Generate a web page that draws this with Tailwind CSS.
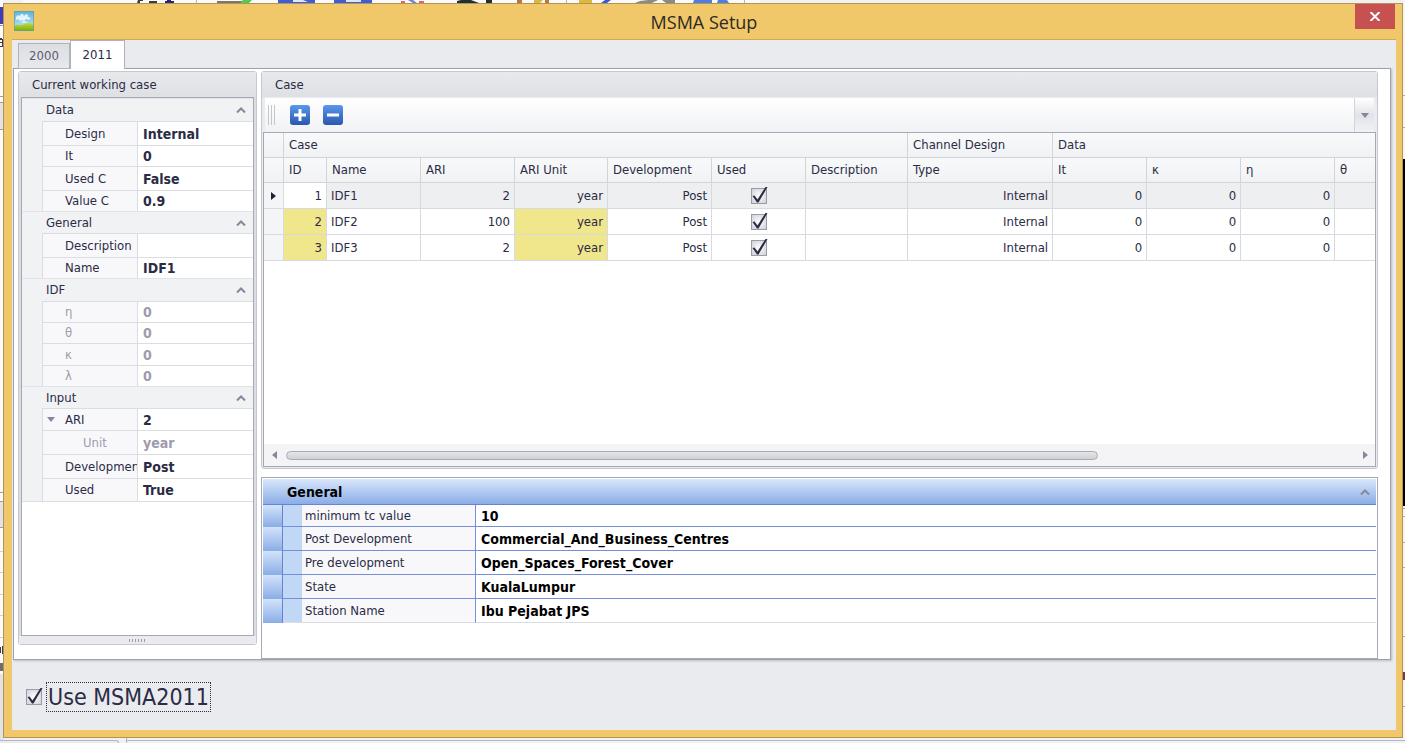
<!DOCTYPE html>
<html lang="en">
  <head>
    <meta charset="UTF-8" />
    <meta name="viewport" content="width=device-width,initial-scale=1" />
    <title>MSMA Setup</title>
    <script src="https://cdn.jsdelivr.net/npm/@tailwindcss/browser@4"></script>
  </head>
  <body class="relative flex min-h-screen flex-col bg-[#f1f1f4] pt-[3px] pr-[2px] pb-[5px] pl-[3px] font-['DejaVu_Sans_Condensed','Noto_Sans',sans-serif] text-[13px] leading-5 text-[#2b2b45]">

    <!-- main application, peeking out behind the dialog -->
    <div class="absolute inset-0 overflow-hidden" aria-hidden="true">
      <svg class="absolute top-0 left-0" width="760" height="3" viewBox="0 0 760 3">
        <path fill="#fafafc" d="M23 0h737v3H23z" />
        <path fill="#3c3c3c" d="M138 0h5v1h-3v2h-3zM149 1h8v2h-8z" />
        <path fill="#26267c" d="M167 0h4v1h3v2h-9V1h2z" />
        <path fill="#77776c" d="M217 1h26v2h-26z" />
        <path fill="#52c952" d="M243 0h9l-3 3h-9z" />
        <path fill="#3c5fd8" d="M278 0h37v3h-37zM334 0h38v3h-38z" />
        <path fill="#dfe6fb" d="M293 0h10l5 2h-15zM346 0h15v2h-15z" />
        <path fill="#e06a6a" d="M401 1h4v2h-4zM419 1h5v2h-5z" />
        <path fill="#6a86e0" d="M408 0h5l4 3h-4z" />
        <path fill="#1f3038" d="M457 1l4-1h10l8 3h-22zM486 0h6v3h-6z" />
        <path fill="#b97838" d="M517 0h5v3h-5zM545 0h4v3h-4z" />
        <path fill="#dcb93c" d="M534 0h9l-3 3h-6zM579 0h13v3h-13z" />
        <path fill="#3558dc" d="M605 0h6l-4 3h-6z" />
        <path fill="#8a8a8a" d="M640 1l8-1h10l-6 3h-17zM662 0h13v3h-9z" />
        <path fill="#4c7ee6" d="M694 0h18v3h-19zM718 0h9l2 3h-12z" />
        <path fill="#b5b7c0" d="M196 0h1v3h-1zM566 0h1v3h-1zM744 0h1v3h-1z" />
      </svg>
      <svg class="absolute top-0 left-0" width="3" height="743" viewBox="0 0 3 743">
        <path fill="#fbfbfd" d="M0 0h3v743H0z" />
        <path fill="#4338c0" d="M0 7h3v17H0z" />
        <path fill="#9a9ca6" d="M0 25h3v1H0zM0 96h3v1H0zM0 102h3v1H0zM0 129h3v1H0zM0 492h3v1H0zM0 501h3v1H0zM0 527h3v1H0z" />
        <path fill="#3a3a58" d="M0 38h2v2H0zM0 42h2v1H0zM0 46h3v1H0z M2 39h1v8H2zM2 646h1v8H2zM0 647h1v6H0z" />
        <path fill="#e2e3e8" d="M0 103h3v26H0zM0 502h3v25H0zM0 674h3v69H0z" />
        <path fill="#cfd0d6" d="M0 551h3v1H0zM0 572h3v1H0zM0 594h3v1H0zM0 615h3v1H0zM0 637h3v1H0z" />
        <path fill="#6c6c74" d="M0 663h3v8H0z" />
      </svg>
      <svg class="absolute top-0 right-0" width="2" height="743" viewBox="0 0 2 743">
        <path fill="#f6f6f9" d="M0 0h2v743H0z" />
        <path fill="#a9abb5" d="M0 95h2v1H0zM0 127h2v1H0zM0 508h2v1H0zM0 516h2v1H0zM0 542h2v1H0zM0 567h2v1H0zM0 636h2v1H0zM0 706h2v1H0z" />
        <path d="M0 159h2v347H0z" />
        <path fill="#7a3c3c" d="M0 672h2v8H0z" />
      </svg>
      <div class="absolute bottom-0 left-0 h-[3px] w-[119px] rounded-tr-sm border-t border-r border-[#b5b7c0] bg-[#eaebef]"></div>
      <div class="absolute right-0 bottom-0 left-[126px] h-[5px] border-l border-[#b5b7c0] bg-[#f1f2f5] pt-[2px]">
        <div class="border-t border-[#b5b7c0]"></div>
      </div>
    </div>

    <!-- dialog -->
    <div class="relative flex flex-1 flex-col border border-[#b3934d] bg-[#f0c869] pr-[6px] pb-[7px] pl-2">

      <!-- title bar -->
      <header class="relative flex h-[35px] items-center justify-center">
        <svg class="absolute top-[7px] left-[2px]" width="20" height="20" viewBox="0 0 20 20">
          <defs>
            <linearGradient id="sky" x1="0" y1="0" x2="0" y2="1">
              <stop offset="0" stop-color="#5fb4de" />
              <stop offset="1" stop-color="#c4ecf6" />
            </linearGradient>
            <linearGradient id="hill" x1="0" y1="0" x2="0" y2="1">
              <stop offset="0" stop-color="#c8dc3c" />
              <stop offset="1" stop-color="#6fae14" />
            </linearGradient>
          </defs>
          <rect width="20" height="20" fill="url(#sky)" />
          <path d="M2 6l2-2 2 1 1-2h2l1 2 2-2 2 1v2l3 1-2 2-3-1-2 2-2-1-2 1-2-2-2 1z" fill="#fff" opacity=".8" />
          <path d="M7 11l3-1 4 1-2 1H8z" fill="#fff" opacity=".7" />
          <path d="M0 15c3-2 6-1 8-1 3-2 7-3 12-1v7H0z" fill="url(#hill)" />
          <rect x=".5" y=".5" width="19" height="19" fill="none" stroke="#6a9d92" stroke-opacity=".7" />
        </svg>
        <h1 class="font-['Open_Sans','Noto_Sans',sans-serif] text-lg text-[#2c2a26]">MSMA Setup</h1>
        <button type="button" aria-label="Close" class="absolute top-0 right-[1px] flex h-[25px] w-10 items-center justify-center bg-[#c75050]">
          <svg width="12" height="9" viewBox="0 0 12 9" stroke="#fff" stroke-width="2"><path d="M1.500 0l9 9M10.500 0l-9 9" /></svg>
        </button>
      </header>

      <main class="flex flex-1 flex-col border-t border-[#cfaa5a] bg-[#eaebef] pr-[5px] pl-[1px]">

        <!-- tabs -->
        <div class="relative z-10 -mb-px flex items-end pl-[5px]" role="tablist">
          <button type="button" role="tab" aria-selected="false" class="h-[26px] w-[52px] border border-[#b0b2bc] bg-linear-to-b from-[#dddee2] to-[#e8e9ed] text-[#5c5c70]">2000</button>
          <button type="button" role="tab" aria-selected="true" class="h-[29px] w-[55px] border border-b-0 border-[#b0b2bc] bg-white">2011</button>
        </div>

        <!-- tab page -->
        <div class="flex flex-1 gap-1 border border-[#9fa1ab] bg-white pt-[2px] pr-3 pl-1 shadow-[1px_1px_2px_#b9bac2]">

          <!-- current working case -->
          <section class="mb-[14px] flex w-[239px] shrink-0 flex-col rounded-[3px] border border-[#c6c8d0] bg-[#dcdde2] px-[2px]">
            <h2 class="-mx-[2px] h-[25px] bg-linear-to-b from-[#e8e9ed] to-[#dfe0e4] pt-[3px] pl-[13px]">Current working case</h2>
            <div class="flex-1 border border-[#a6a8b4] bg-white">
              <table class="w-full table-fixed border-separate border-spacing-0 text-left">
                <colgroup>
                  <col class="w-[21px]" />
                  <col class="w-[95px]" />
                  <col />
                </colgroup>
                <tbody id="case-props"></tbody>
              </table>
            </div>
            <div class="-mx-[2px] flex h-2 items-center justify-center bg-[#eaebef]">
              <div class="h-[3px] w-[17px] bg-[repeating-linear-gradient(90deg,#9a9ca8_0_1px,transparent_1px_3px)]"></div>
            </div>
          </section>

          <div class="flex min-w-0 flex-1 flex-col gap-2">

            <!-- case list -->
            <section class="flex flex-1 flex-col rounded-[3px] border border-[#c6c8d0] bg-[#eaebef] px-px pb-px">
              <h2 class="-mx-px h-[25px] bg-linear-to-b from-[#e8e9ed] to-[#dfe0e4] pt-[3px] pl-[13px]">Case</h2>
              <div class="mt-px mr-[2px] ml-[2px] flex h-[34px] items-center bg-linear-to-b from-white to-[#f1f2f5]">
                <div class="ml-[3px] h-5 w-[7px] bg-[repeating-linear-gradient(90deg,#c4c5cd_0_1px,transparent_1px_3px)]"></div>
                <button type="button" aria-label="Add case" class="ml-[15px] flex size-5 items-center justify-center rounded-[3px] bg-linear-to-b from-[#5b97ee] to-[#2958ae]">
                  <svg width="14" height="14" viewBox="0 0 14 14" fill="#fff"><path d="M5.500 1h3v4.500h4.500v3H8.500V13h-3V8.500H1v-3h4.500z" /></svg>
                </button>
                <button type="button" aria-label="Remove case" class="ml-[13px] flex size-5 items-center justify-center rounded-[3px] bg-linear-to-b from-[#5b97ee] to-[#2958ae]">
                  <svg width="14" height="14" viewBox="0 0 14 14" fill="#fff"><path d="M1 5.500h12v3H1z" /></svg>
                </button>
                <button type="button" aria-label="Toolbar options" class="ml-auto flex h-full w-5 items-center justify-center border-l border-[#d3d4da] bg-linear-to-b from-white via-[#e2e3e9] to-[#f1f2f5]">
                  <svg width="8" height="5" viewBox="0 0 8 5" fill="#85879a"><path d="M0 0h8L4 5z" /></svg>
                </button>
              </div>

              <div class="flex flex-1 flex-col border border-[#a6a8b4] bg-white">
                <table class="w-full table-fixed border-separate border-spacing-0">
                  <colgroup>
                    <col class="w-5" />
                    <col class="w-[43px]" />
                    <col class="w-[94px]" />
                    <col class="w-[94px]" />
                    <col class="w-[93px]" />
                    <col class="w-[104px]" />
                    <col class="w-[94px]" />
                    <col class="w-[102px]" />
                    <col class="w-[145px]" />
                    <col class="w-[94px]" />
                    <col class="w-[94px]" />
                    <col class="w-[94px]" />
                    <col />
                  </colgroup>
                  <thead id="case-head"></thead>
                  <tbody id="case-rows"></tbody>
                </table>

                <!-- horizontal scroll bar -->
                <div class="mt-auto flex h-[22px] items-center bg-[#f4f4f6] pr-[7px] pl-2">
                  <svg width="5" height="8" viewBox="0 0 5 8" fill="#85879a"><path d="M5 0v8L0 4z" /></svg>
                  <div class="mx-[9px] flex-1">
                    <div class="h-[9px] w-[76%] rounded-full border border-[#a9abb4] bg-linear-to-b from-[#e4e5e8] to-[#d0d1d5]"></div>
                  </div>
                  <svg width="5" height="8" viewBox="0 0 5 8" fill="#85879a"><path d="M0 0v8l5-4z" /></svg>
                </div>
              </div>
            </section>

            <!-- general settings -->
            <section class="h-[182px] border border-[#a6a8b4] bg-white p-px">
              <table class="w-full table-fixed border-separate border-spacing-0 text-left">
                <colgroup>
                  <col class="w-5" />
                  <col class="w-[193px]" />
                  <col />
                </colgroup>
                <tbody id="general-props"></tbody>
              </table>
            </section>
          </div>
        </div>

        <!-- footer -->
        <footer class="flex h-[70px] items-center pt-[3px] pl-[13px]">
          <span class="grid size-4">
            <input id="use-2011" type="checkbox" checked class="col-start-1 row-start-1 size-4 appearance-none border border-[#9a9ca8] bg-radial from-white to-[#cfd0d7]" />
            <svg class="pointer-events-none col-start-1 row-start-1 overflow-visible" width="16" height="16" viewBox="0 0 16 16" fill="#2b2b45"><path d="M1.500 8L3.500 7.500l3 4L14.500-1H16.500L7.500 14.500H6z" /></svg>
          </span>
          <label for="use-2011" class="ml-1 border border-dotted border-[#2b2b45] px-px text-[23px] leading-7">Use MSMA2011</label>
        </footer>
      </main>
    </div>

    <script>
      const caseProps = [
        { group: "Data", h: "h-[23px]" },
        { name: "Design", value: "Internal", h: "h-6" },
        { name: "It", value: "0", h: "h-[21px]" },
        { name: "Used C", value: "False", h: "h-6" },
        { name: "Value C", value: "0.9", h: "h-[21px]" },
        { group: "General", h: "h-[22px]" },
        { name: "Description", value: "", h: "h-6" },
        { name: "Name", value: "IDF1", h: "h-[21px]" },
        { group: "IDF", h: "h-[23px]" },
        { name: "η", value: "0", h: "h-[21px]", off: true },
        { name: "θ", value: "0", h: "h-[21px]", off: true },
        { name: "κ", value: "0", h: "h-[22px]", off: true },
        { name: "λ", value: "0", h: "h-[21px]", off: true },
        { group: "Input", h: "h-[22px]" },
        { name: "ARI", value: "2", h: "h-[22px]", open: true },
        { name: "Unit", value: "year", h: "h-6", off: true, child: true },
        { name: "Development", value: "Post", h: "h-6" },
        { name: "Used", value: "True", h: "h-[23px]" },
      ];

      const cases = [
        { id: 1, name: "IDF1", ari: 2 },
        { id: 2, name: "IDF2", ari: 100 },
        { id: 3, name: "IDF3", ari: 2 },
      ];

      const general = [
        ["minimum tc value", "10"],
        ["Post Development", "Commercial_And_Business_Centres"],
        ["Pre development", "Open_Spaces_Forest_Cover"],
        ["State", "KualaLumpur"],
        ["Station Name", "Ibu Pejabat JPS"],
      ];

      const chevron = `<svg width="10" height="6" viewBox="0 0 10 6" fill="none" stroke="#85879a" stroke-width="2"><path d="M1 5.500l4-4 4 4" /></svg>`;

      /* left property grid */
      document.getElementById("case-props").innerHTML = caseProps.map(p => {
        if (p.group) {
          return `
            <tr class="${p.h} bg-[#f1f2f4]">
              <th colspan="3" class="border-t border-[#e2e3e8] p-0 font-normal">
                <div class="flex items-center pr-[7px] pl-6">
                  ${p.group}
                  <button type="button" aria-label="Collapse ${p.group}" class="ml-auto">${chevron}</button>
                </div>
              </th>
            </tr>`;
        }
        return `
          <tr class="${p.h} ${p.off ? "text-[#9c9cab]" : ""}">
            <td class="border-r border-[#dcdde3] bg-[#f1f2f4] p-0"></td>
            <th class="overflow-hidden border-t border-r border-[#dcdde3] bg-[#f8f8fb] p-0 font-normal whitespace-nowrap">
              <div class="flex items-center ${p.child ? "pl-10" : p.open ? "pl-1" : "pl-[22px]"}">
                ${p.open ? `<button type="button" aria-label="Collapse ${p.name}" class="mr-[10px]"><svg width="8" height="5" viewBox="0 0 8 5" fill="#85879a"><path d="M0 0h8L4 5z" /></svg></button>` : ""}${p.name}
              </div>
            </th>
            <td class="border-t border-[#dcdde3] p-0 pl-[5px] text-sm leading-5 font-bold">${p.value}</td>
          </tr>`;
      }).join("") + `<tr><td colspan="3" class="border-t border-[#dcdde3] p-0"></td></tr>`;

      /* case table */
      const bands = [["", 1], ["Case", 7], ["Channel Design", 1], ["Data", 4]];
      const columns = ["", "ID", "Name", "ARI", "ARI Unit", "Development", "Used", "Description", "Type", "It", "κ", "η", "θ"];
      const th = (text, span) => `
        <th colspan="${span}" class="border-r border-b border-[#d3d4da] bg-linear-to-b from-[#f8f9fa] to-[#f1f2f4] p-0 pl-[5px] text-left font-normal whitespace-nowrap last:border-r-0">${text}</th>`;
      document.getElementById("case-head").innerHTML = `
        <tr class="h-[25px]">${bands.map(b => th(b[0], b[1])).join("")}</tr>
        <tr class="h-[25px]">${columns.map(c => th(c, 1)).join("")}</tr>`;

      const cell = "border-r border-b border-[#d9dae0] p-0 px-1 last:border-r-0";
      document.getElementById("case-rows").innerHTML = cases.map((c, i) => {
        const current = i === 0;
        const mark = current ? "" : "bg-[#f0e68c]";
        return `
          <tr class="h-[26px] text-right ${current ? "bg-[#eeeff1]" : ""}">
            <td class="${cell} bg-[#f4f5f7]">${current ? `<svg class="mx-auto" width="5" height="8" viewBox="0 0 5 8" fill="#1f1f38"><path d="M0 0v8l5-4z" /></svg>` : ""}</td>
            <td class="${cell} ${current ? "bg-white" : mark}">${c.id}</td>
            <td class="${cell} text-left">${c.name}</td>
            <td class="${cell}">${c.ari}</td>
            <td class="${cell} ${mark}">year</td>
            <td class="${cell}">Post</td>
            <td class="${cell}">
              <span class="mx-auto grid size-4">
                <input type="checkbox" checked aria-label="${c.name} used" class="col-start-1 row-start-1 size-4 appearance-none border border-[#9a9ca8] bg-radial from-white to-[#cfd0d7]" />
                <svg class="pointer-events-none col-start-1 row-start-1 overflow-visible" width="16" height="16" viewBox="0 0 16 16" fill="#2b2b45"><path d="M1.500 8L3.500 7.500l3 4L14.500-1H16.500L7.500 14.500H6z" /></svg>
              </span>
            </td>
            <td class="${cell}"></td>
            <td class="${cell}">Internal</td>
            <td class="${cell}">0</td>
            <td class="${cell}">0</td>
            <td class="${cell}">0</td>
            <td class="${cell}"></td>
          </tr>`;
      }).join("");

      /* general settings */
      document.getElementById("general-props").innerHTML = `
        <tr class="h-[26px] text-black">
          <th colspan="3" class="border-b border-[#6684d2] bg-linear-to-b from-[#d9e7fb] to-[#8bade6] p-0 text-sm leading-5">
            <div class="flex items-center pr-[6px] pl-6">
              General
              <button type="button" aria-label="Collapse General" class="ml-auto">${chevron}</button>
            </div>
          </th>
        </tr>` + general.map(([name, value], i) => {
          const line = i === general.length - 1 ? "border-b-[#dcdde3]" : "border-b-[#7590da]";
          return `
            <tr class="${i === 0 ? "h-[22px]" : "h-6"}">
              <td class="border-r border-r-[#6684d2] bg-linear-to-b from-[#d3e3fa] to-[#8bade6] p-0"></td>
              <th class="border-r border-b border-r-[#7590da] ${line} bg-[linear-gradient(90deg,#c1d7f6_19px,#f8f8fb_19px)] p-0 pl-[22px] font-normal">${name}</th>
              <td class="border-b ${line} p-0 pl-[5px] text-sm leading-5 font-bold text-black">${value}</td>
            </tr>`;
        }).join("");
    </script>
  </body>
</html>
